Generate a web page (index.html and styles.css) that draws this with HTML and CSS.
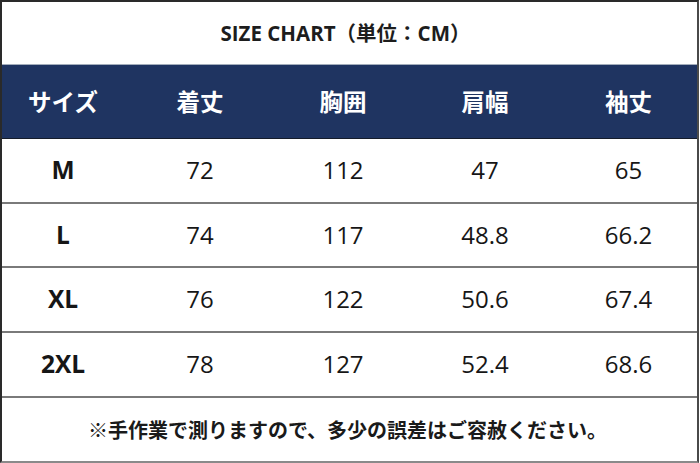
FILE: index.html
```html
<!DOCTYPE html>
<html lang="ja">
<head>
<meta charset="utf-8">
<link rel="stylesheet" href="styles.css">
</head>
<body>
<div class="chart">
  <div class="title">SIZE CHART（単位：CM）</div>
  <div class="row head">
    <div class="cell">サイズ</div>
    <div class="cell">着丈</div>
    <div class="cell">胸囲</div>
    <div class="cell">肩幅</div>
    <div class="cell">袖丈</div>
  </div>
  <div class="row data r1">
    <div class="cell size">M</div>
    <div class="cell">72</div>
    <div class="cell">112</div>
    <div class="cell">47</div>
    <div class="cell">65</div>
  </div>
  <div class="row data r2">
    <div class="cell size">L</div>
    <div class="cell">74</div>
    <div class="cell">117</div>
    <div class="cell">48.8</div>
    <div class="cell">66.2</div>
  </div>
  <div class="row data r3">
    <div class="cell size">XL</div>
    <div class="cell">76</div>
    <div class="cell">122</div>
    <div class="cell">50.6</div>
    <div class="cell">67.4</div>
  </div>
  <div class="row data r4">
    <div class="cell size">2XL</div>
    <div class="cell">78</div>
    <div class="cell">127</div>
    <div class="cell">52.4</div>
    <div class="cell">68.6</div>
  </div>
  <div class="note">※手作業で測りますので、多少の誤差はご容赦ください。</div>
</div>
</body>
</html>
```

FILE: styles.css
```css
* { box-sizing: border-box; }
html, body { margin: 0; padding: 0; background: #fff; }
body {
  width: 700px;
  height: 463px;
  overflow: hidden;
  font-family: "Open Sans", "Noto Sans CJK JP", sans-serif;
  color: #161616;
}
.chart {
  width: 699px;
  height: 463px;
  border-top: 2px solid #2a2a2a;
  border-left: 2px solid #2a2a2a;
  border-right: 2px solid #4a4a4a;
  border-bottom: 2px solid #8a8a8a;
  display: flex;
  flex-direction: column;
}
.title {
  height: 63px;
  border-bottom: 1px solid #a3adbb;
  display: flex;
  align-items: center;
  justify-content: center;
  padding-left: 0;
  padding-right: 8px;
  padding-bottom: 2px;
  font-family: "Open Sans", "Noto Sans CJK JP", sans-serif;
  font-weight: 700;
  font-size: 20.5px;
  color: #1d1d1d;
}
.row {
  display: grid;
  grid-template-columns: 122px 152px 134px 150px 137px;
  align-items: center;
}
.cell { text-align: center; }
.head {
  height: 74px;
  background: #1f3461;
  border-bottom: 1px solid #151c2a;
  color: #fff;
  font-family: "Noto Sans CJK JP", sans-serif;
  font-weight: 700;
  font-size: 23.5px;
  padding-bottom: 2px;
}
.data {
  font-size: 24px;
  border-bottom: 2px solid #7a7a7a;
  padding-bottom: 2px;
}
.r1 { height: 65px; }
.r2 { height: 64px; }
.r3 { height: 65px; }
.r4 { height: 65px; }
.size { font-weight: 700; font-size: 24.5px; }
.note {
  flex: 1;
  display: flex;
  align-items: center;
  justify-content: center;
  padding-right: 4px;
  font-family: "Noto Sans CJK JP", sans-serif;
  font-weight: 700;
  font-size: 20px;
  color: #1a1a1a;
}
```
